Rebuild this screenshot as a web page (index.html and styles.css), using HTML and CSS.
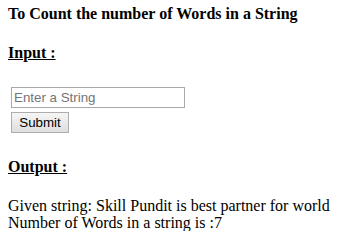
FILE: index.html
```html
<!DOCTYPE html>
<html>
<head>
<meta charset="utf-8">
<link rel="stylesheet" href="styles.css">
</head>
<body>
<div class="page">
  <h4 class="title">To Count the number of Words in a String</h4>
  <h4 class="section"><u>Input :</u></h4>
  <form class="form">
    <input class="field" type="text" placeholder="Enter a String">
    <button class="btn" type="button">Submit</button>
  </form>
  <h4 class="section out"><u>Output :</u></h4>
  <div class="result">
    <div class="line">Given string: Skill Pundit is best partner for world</div>
    <div class="line">Number of Words in a string is :7</div>
  </div>
</div>
</body>
</html>
```
FILE: styles.css
```css
html, body {
  margin: 0;
  background: #fff;
}
.page {
  padding: 5px 8px 0 8px;
  font-family: "Liberation Serif", "Times New Roman", serif;
  font-size: 16px;
  color: #000;
}
.title {
  margin: 0;
  font-size: 16px;
  font-weight: bold;
  line-height: 18px;
}
.section {
  margin: 21px 0 0 0;
  font-size: 16px;
  font-weight: bold;
  line-height: 18px;
}
.form {
  display: flex;
  flex-direction: column;
  align-items: flex-start;
  gap: 4px;
  margin: 25px 0 0 3px;
}
.field {
  box-sizing: border-box;
  width: 174px;
  height: 21px;
  margin: 0;
  padding: 0 2px;
  border: 1px solid #a9a9a9;
  font-family: "Liberation Sans", Arial, sans-serif;
  font-size: 13.33px;
  color: #000;
}
.field::placeholder {
  color: #757575;
}
.btn {
  box-sizing: border-box;
  width: 58px;
  height: 21px;
  margin: 0;
  padding: 0 6px;
  border: 1px solid #adadad;
  border-radius: 0;
  background: linear-gradient(#f6f6f6, #dedede);
  font-family: "Liberation Sans", Arial, sans-serif;
  font-size: 13.33px;
  color: #000;
}
.out {
  margin-top: 25px;
}
.result {
  margin-top: 21px;
  line-height: 17px;
}
```
